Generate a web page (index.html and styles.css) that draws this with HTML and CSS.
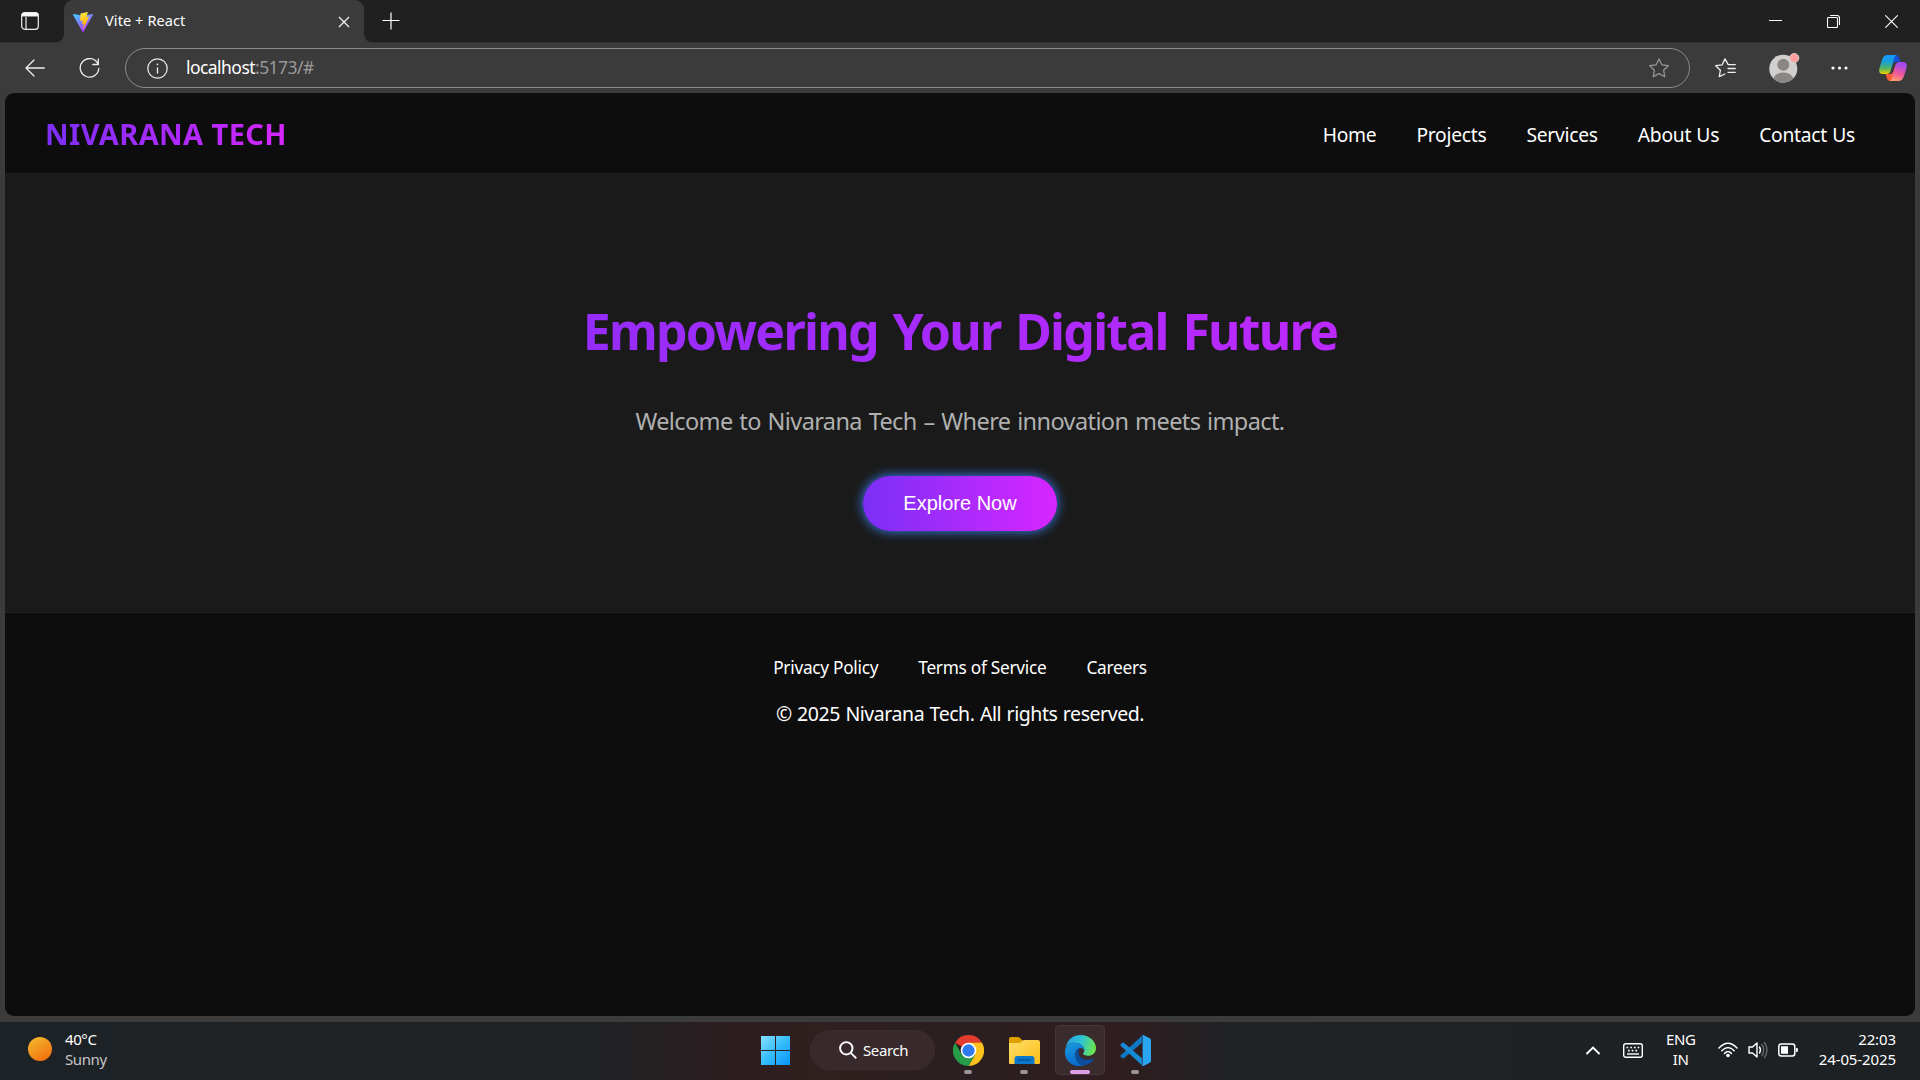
FILE: index.html
```html
<!DOCTYPE html>
<html lang="en">
<head>
<meta charset="utf-8">
<title>Vite + React</title>
<link rel="stylesheet" href="styles.css">
</head>
<body>
<div class="tabstrip">
  <svg class="workspaces" width="18" height="18" viewBox="0 0 18 18" fill="none" stroke="#eee" stroke-width="1.2"><rect x=".7" y=".7" width="16.6" height="16.6" rx="3"/><path d="M5 5v12"/><path d="M1 4V3q0-2 2-2h12q2 0 2 2v1z" fill="#fff"/></svg>
  <div class="tab">
    <svg width="20" height="20" viewBox="0 0 32 32"><defs><linearGradient id="va" x1="0" y1="0" x2=".6" y2="1"><stop stop-color="#41d1ff"/><stop offset="1" stop-color="#bd34fe"/></linearGradient><linearGradient id="vb" x1=".4" y1="0" x2=".6" y2="1"><stop stop-color="#ffea83"/><stop offset=".1" stop-color="#ffdd35"/><stop offset="1" stop-color="#ffa800"/></linearGradient></defs><path fill="url(#va)" d="M31.8 4.8 16.9 31.4a1 1 0 0 1-1.8 0L.1 4.8a1 1 0 0 1 1.1-1.5l14.900 2.700 14.600-2.700a1 1 0 0 1 1.100 1.500z"/><path fill="url(#vb)" d="M23.300.1 12.300 2.200a.4.4 0 0 0-.3.4l-.7 11.400a.4.4 0 0 0 .5.400l3.100-.7a.4.4 0 0 1 .5.500l-.9 4.500a.4.4 0 0 0 .5.500l1.900-.6a.4.4 0 0 1 .5.500l-1.500 7c-.1.400.500.700.7.300l9.100-18.500a.4.4 0 0 0-.4-.6l-3.200.6a.4.4 0 0 1-.5-.5L23.700.6a.4.4 0 0 0-.4-.5z"/></svg>
    <span class="tab-title">Vite + React</span>
    <svg width="12" height="12" viewBox="0 0 12 12" stroke="#eee" stroke-width="1.4"><path d="M1 1l10 10M11 1 1 11"/></svg>
  </div>
  <svg class="newtab" width="18" height="18" viewBox="0 0 18 18" stroke="#fff" stroke-width="1.2"><path d="M9 .5v17M.5 8.500h17"/></svg>
  <div class="window-controls">
    <svg width="13" height="13" viewBox="0 0 13 13"><path d="M0 5.500h13" stroke="#fff"/></svg>
    <svg width="13" height="13" viewBox="0 0 13 13" fill="none" stroke="#fff" stroke-width="1.1"><rect x=".5" y="2.500" width="10" height="10" rx="1"/><path d="M3 .5h7q2.500 0 2.500 2.500v7"/></svg>
    <svg width="13" height="13" viewBox="0 0 13 13" stroke="#fff" stroke-width="1.1"><path d="M.3.3l12.400 12.400M12.700.3.3 12.700"/></svg>
  </div>
</div>
<div class="toolbar">
  <svg width="20" height="18" viewBox="0 0 20 18" fill="none" stroke="#eee" stroke-width="1.300" stroke-linecap="round" stroke-linejoin="round"><path d="M19.300 9H1M9 1 1 9l8 8"/></svg>
  <svg class="reload" width="21" height="21" viewBox="0 0 21 21" fill="none" stroke="#eee" stroke-width="1.300" stroke-linecap="round" stroke-linejoin="round"><path d="M19 6A9.300 9.300 0 1 0 19.800 10.500M19.300 1v5.500h-5.500"/></svg>
  <div class="address">
    <svg width="21" height="21" viewBox="0 0 21 21" fill="none" stroke="#eee" stroke-width="1.200"><circle cx="10.500" cy="10.500" r="9.700"/><path d="M10.500 9.500v6" stroke-width="1.400"/><circle cx="10.500" cy="6.300" r=".9" fill="#eee" stroke="none"/></svg>
    <span class="url"><b>localhost</b>:5173/#</span>
    <svg width="20" height="20" viewBox="0 0 20 20" fill="none" stroke="#999" stroke-width="1.200" stroke-linejoin="round"><path d="M10 .9l2.800 5.900 6.500.9-4.700 4.500 1.100 6.500L10 15.600l-5.700 3.100 1.100-6.500L.7 7.700l6.500-.9z"/></svg>
  </div>
  <svg class="favorites" width="21" height="20" viewBox="0 0 21 20" fill="none" stroke="#eee" stroke-width="1.300" stroke-linejoin="round" stroke-linecap="round"><path d="M19.500 6.600h-6.300L10 .9 7.200 6.800l-6.500.9 4.700 4.500-1.100 6.500L9.800 16M13 10.500h7.300M13 14.300h7.300M19.500 6.600h.8"/></svg>
  <svg class="profile" width="31" height="30" viewBox="0 0 31 30"><defs><clipPath id="pc"><circle cx="14.300" cy="15.700" r="14"/></clipPath></defs><circle cx="14.300" cy="15.700" r="14" fill="#d2d0ce"/><g clip-path="url(#pc)" fill="#8a8886"><circle cx="14.300" cy="11.700" r="6"/><ellipse cx="14.300" cy="26.500" rx="10" ry="7"/></g><circle cx="25.300" cy="5" r="4.500" fill="#ff9e9a" stroke="#d9cccb"/></svg>
  <svg class="more" width="17" height="4" viewBox="0 0 17 4" fill="#fff"><circle cx="2" cy="2" r="1.600"/><circle cx="8.500" cy="2" r="1.600"/><circle cx="15" cy="2" r="1.600"/></svg>
  <svg class="copilot" width="28" height="26" viewBox="0 0 28 26"><defs><linearGradient id="c1" x1="0" y1="0" x2="0" y2="1"><stop stop-color="#169bff"/><stop offset=".35" stop-color="#199fd9"/><stop offset=".7" stop-color="#52b464"/><stop offset="1" stop-color="#f2d600"/></linearGradient><linearGradient id="c2" x1=".3" y1="0" x2="0" y2="1"><stop stop-color="#a34bf0"/><stop offset=".5" stop-color="#f0589b"/><stop offset="1" stop-color="#ffab62"/></linearGradient></defs><path d="M14 0h3q2.300 0 3 2.500L21.500 7H17q-2.500 0-3.500 3L11 18z" fill="#1650d3"/><path d="M14 26h-3q-2.300 0-3-2.500L6.500 19H11q2.500 0 3.500-3L17 8z" fill="#f35b39"/><path d="M8.500 0H18q-2 0-3 3.500l-3.300 12Q10.500 19 7.500 19H4Q-1 19 .5 13L3 5Q4.500 0 8.500 0z" fill="url(#c1)"/><path d="M19.500 26H10q2 0 3-3.500l3.300-12Q17.500 7 20.500 7H24q5 0 3.500 6L25 21q-1.500 5-5.500 5z" fill="url(#c2)"/></svg>
</div>
<div class="viewport">
  <header class="site-header">
    <div class="logo">NIVARANA TECH</div>
    <nav class="nav"><a>Home</a><a>Projects</a><a>Services</a><a>About Us</a><a>Contact Us</a></nav>
  </header>
  <section class="hero">
    <h1>Empowering Your Digital Future</h1>
    <p>Welcome to Nivarana Tech – Where innovation meets impact.</p>
    <button>Explore Now</button>
  </section>
  <footer class="site-footer">
    <div class="links"><a>Privacy Policy</a><a>Terms of Service</a><a>Careers</a></div>
    <p>© 2025 Nivarana Tech. All rights reserved.</p>
  </footer>
</div>
<div class="taskbar">
  <div class="weather"><span class="sun"></span><div class="stack"><span>40°C</span><span class="dim">Sunny</span></div></div>
  <svg class="start" width="29" height="29" viewBox="0 0 29 29"><defs><linearGradient id="w" gradientUnits="userSpaceOnUse" x1="0" y1="0" x2="29" y2="29"><stop stop-color="#86e0ff"/><stop offset=".5" stop-color="#35bcfb"/><stop offset="1" stop-color="#0795f8"/></linearGradient></defs><path fill="url(#w)" d="M0 0h14v14H0zM15 0h14v14H15zM0 15h14v14H0zM15 15h14v14H15z"/></svg>
  <div class="search"><svg width="18" height="18" viewBox="0 0 18 18" fill="none" stroke="#fff" stroke-width="1.900"><circle cx="7.300" cy="7.300" r="6.200"/><path d="M11.800 11.800l5.500 5.500"/></svg><span>Search</span></div>
  <div class="apps">
    <div class="app"><svg width="31" height="31" viewBox="0 0 48 48"><path d="M24 24 3.200 12A24 24 0 0 1 44.800 12z" fill="#e33b2e"/><path d="M24 24V12h20.800A24 24 0 0 1 24 48L34.400 30z" fill="#fcc21b"/><path d="M24 24l10.400 6L24 48A24 24 0 0 1 3.200 12L13.600 30z" fill="#269b48"/><circle cx="24" cy="24" r="12" fill="#fff"/><circle cx="24" cy="24" r="9.500" fill="#2f7bee"/></svg></div>
    <div class="app"><svg width="31" height="27" viewBox="0 0 31 27"><defs><linearGradient id="f" x1="0" y1="0" x2="1" y2="1"><stop stop-color="#ffdf6a"/><stop offset="1" stop-color="#fdbc16"/></linearGradient></defs><path d="M0 10V2Q0 0 2 0h7q1.500 0 2.500 1.500L14 4l-3 6z" fill="#e0a000"/><path d="M0 6h10q1.500 0 2.500-1.500T15 3h14q2 0 2 2v21q0 1-1 1H1q-1 0-1-1z" fill="url(#f)"/><path d="M5.500 27v-5q0-3 3-3h14q3 0 3 3v5z" fill="#0c77cb"/><path d="M9 23h13" stroke="#064f9a" stroke-width="1.300"/></svg></div>
    <div class="app active"><svg width="31" height="31" viewBox="0 0 48 48"><defs><linearGradient id="e1" x1="0" y1=".3" x2="1" y2=".5"><stop stop-color="#259fe3"/><stop offset=".5" stop-color="#2dc5d3"/><stop offset="1" stop-color="#6be548"/></linearGradient><linearGradient id="e2" x1="0" y1="0" x2=".4" y2="1"><stop stop-color="#1b9de2"/><stop offset="1" stop-color="#0869c9"/></linearGradient></defs><path d="M1 20C4 6 13 0 24 0c14 0 24 10 24 20 0 8-6 12-12 12-5 0-8-1.500-8-3 0-1.500 2-2 2-5C30 17 23 12 15 12 8 12 3 15 1 20z" fill="url(#e1)"/><path d="M0 25C1 16 8 12 15 12c8 0 15 5 15 12-1-2-3-4-6-4-5 0-8 5-8 10 0 8 5 15 13 18-16 3-30-7-29-23z" fill="url(#e2)"/><path d="M24 20c-5 1-8 5-8 10 0 9 6 18 15 17 6-1 10-4 13-9 1-1 0-2-1-1.500C33 41 22 37 21 28c-.3-3 1-6 3-8z" fill="#0b4c9c"/></svg></div>
    <div class="app"><svg width="31" height="31" viewBox="0 0 48 48"><path d="M34 12 6 36q-1 .7-2 0l-3-2.500q-1-1 0-2L34 1z" fill="#0f78c3"/><path d="M34 36 6 12q-1-.7-2 0l-3 2.500q-1 1 0 2L34 47z" fill="#168bd5"/><path d="M34 .5q1.500-.8 3 0L46 5q2 1 2 3v32q0 2-2 3l-9 4.500q-2 1-3.500-.5 1.500.5 1.500-2V3q0-2-1-2.500z" fill="#2aa5f2"/></svg></div>
  </div>
  <div class="tray">
    <svg width="14" height="9" viewBox="0 0 14 9" fill="none" stroke="#fff" stroke-width="1.800" stroke-linecap="round"><path d="M1 7.500l6-6 6 6"/></svg>
    <svg class="keyboard" width="20" height="15" viewBox="0 0 20 15" fill="none" stroke="#fff" stroke-width="1.400"><rect x=".7" y=".7" width="18.600" height="13.600" rx="2"/><path d="M3.500 4.500h14" stroke-width="1.700" stroke-dasharray="1.700 2"/><path d="M5 7.700h11" stroke-width="1.700" stroke-dasharray="1.700 2"/><path d="M4 11h12" stroke-width="1.400"/></svg>
    <div class="stack lang"><span>ENG</span><span>IN</span></div>
    <svg class="wifi" width="20" height="16" viewBox="0 0 20 16" fill="none" stroke="#fff" stroke-width="1.500" stroke-linecap="round"><path d="M1 6q9-9.500 18 0M3.800 8.700q6.200-6.600 12.400 0M6.500 11.400q3.500-3.800 7 0"/><circle cx="10" cy="13.500" r="1.800" fill="#fff" stroke="none"/></svg>
    <svg class="speaker" width="20" height="18" viewBox="0 0 20 18" fill="none" stroke="#fff" stroke-width="1.400" stroke-linejoin="round" stroke-linecap="round"><path d="M1 6h3.500L9 2v14L4.500 12H1zM11.500 6q2 3 0 6"/><path d="M14 3.500q3.500 5.500 0 11M16.500 1.500q5 7.500 0 15" stroke="#666"/></svg>
    <svg class="battery" width="20" height="14" viewBox="0 0 20 14"><rect x=".8" y="1" width="16" height="12" rx="2.500" fill="none" stroke="#fff" stroke-width="1.500"/><path d="M3 3.200h7v7.600H3zM18 5h1q1 0 1 2t-1 2h-1z" fill="#fff"/></svg>
    <div class="stack clock"><span>22:03</span><span>24-05-2025</span></div>
  </div>
</div>
</body>
</html>
```
FILE: styles.css
```css
* { box-sizing: border-box; }
body { margin: 0; width: 1920px; height: 1080px; overflow: hidden; display: flex; flex-direction: column; background: #3b3b3b; color: #fff; font-family: "Noto Sans", "Open Sans", sans-serif; }
svg { display: block; flex: none; }
h1, p { margin: 0; }

.tabstrip { height: 43px; flex: none; display: flex; align-items: center; background: #202020; border-bottom: 1px solid #303030; }
.workspaces { margin: 0 25px 0 21px; }
.tab { position: relative; width: 300px; height: 43px; margin-bottom: -1px; padding: 0 14px 0 9px; display: flex; align-items: center; background: #3b3b3b; border-radius: 9px 9px 0 0; }
.tab::before, .tab::after { content: ""; position: absolute; bottom: 0; width: 9px; height: 9px; }
.tab::before { left: -9px; background: radial-gradient(circle at 0 0, transparent 8.5px, #3b3b3b 9px); }
.tab::after { right: -9px; background: radial-gradient(circle at 100% 0, transparent 8.5px, #3b3b3b 9px); }
.tab-title { flex: 1; margin-left: 12px; font-size: 14.5px; line-height: 20px; letter-spacing: .1px; padding-bottom: 3px; }
.newtab { margin-left: 18px; }
.window-controls { margin-left: auto; margin-right: 22px; display: flex; gap: 45px; }

.toolbar { height: 50px; flex: none; display: flex; align-items: center; padding: 0 13px 0 25px; }
.reload { margin: 0 25px 0 34px; }
.address { width: 1565px; height: 40px; display: flex; align-items: center; padding: 0 20px 0 21px; border: 1px solid #8b8b8b; border-radius: 20px; }
.url { flex: 1; margin-left: 18px; font-size: 17.5px; line-height: 24px; letter-spacing: -.55px; color: #999; padding-bottom: 2px; }
.url b { font-weight: 400; color: #fff; }
.favorites { margin-left: 25px; }
.profile { margin-left: 33px; }
.more { margin-left: 31px; }
.copilot { margin-left: auto; }

.viewport { height: 923px; flex: none; margin: 0 5px; background: #0d0d0d; border-radius: 9px; overflow: hidden; }
.site-header { height: 81px; display: flex; align-items: center; justify-content: space-between; padding: 0 60px 0 40px; border-bottom: 1px solid #1f1f1f; }
.logo { font-size: 29px; line-height: 40px; font-weight: 700; letter-spacing: .4px; padding-top: 2px; color: transparent; background: linear-gradient(90deg, #7b2ff7, #d726ff); background-clip: text; }
.nav { display: flex; gap: 40px; padding-top: 4px; font-size: 19.25px; line-height: 28px; letter-spacing: -.26px; word-spacing: .5px; }
.hero { height: 438px; display: flex; flex-direction: column; align-items: center; background: #1a1a1a; padding: 123px 40px 0; }
.hero h1 { width: 100%; text-align: center; font-size: 50px; line-height: 68px; letter-spacing: -1.75px; word-spacing: 3.5px; color: transparent; background: linear-gradient(90deg, #7b2ff7, #d726ff); background-clip: text; }
.hero p { margin: 40px 0 39px; font-size: 23.5px; line-height: 32px; letter-spacing: -.6px; word-spacing: 1.2px; color: #b0b0b0; }
.hero button { width: 194px; height: 55px; border: 0; border-radius: 28px; background: linear-gradient(90deg, #7b2ff7, #d726ff); color: #fff; font: 20px "Liberation Sans", Arial, sans-serif; box-shadow: 0 0 12px #3a86ff; }
.site-footer { padding-top: 43px; text-align: center; border-top: 1px solid #222; }
.links { display: flex; justify-content: center; gap: 40px; font-size: 17.25px; line-height: 24px; letter-spacing: -.27px; }
.site-footer p { margin-top: 21px; font-size: 19.5px; line-height: 26px; letter-spacing: -.44px; word-spacing: .8px; }

.taskbar { height: 59px; margin-top: auto; flex: none; display: flex; align-items: center; padding-bottom: 2px; border-top: 1px solid #393b3c; font-size: 15px; background: linear-gradient(90deg, #1d2226 0, #1e2225 30%, #2d1d1f 39%, #30201f 43%, #2a1f21 50%, #301d1f 58%, #202225 64%, #1d2124 100%); }
.stack { display: flex; flex-direction: column; line-height: 20px; padding-bottom: 3px; letter-spacing: -.4px; }
.dim { color: #c5c7c8; }
.weather { width: 761px; display: flex; align-items: center; padding-left: 28px; gap: 13px; }
.sun { width: 24px; height: 24px; border-radius: 50%; background: linear-gradient(150deg, #f3bd2e, #f2670b); margin-bottom: 2px; }
.search { width: 125px; height: 40px; margin: 0 8px 0 20px; padding-left: 28px; display: flex; align-items: center; gap: 6px; border-radius: 20px; border: 1px solid #3b2e30; background: #382a2c; letter-spacing: -.4px; }
.search span { padding-bottom: 1px; }
.apps { display: flex; gap: 6px; }
.app { position: relative; width: 50px; height: 50px; display: flex; align-items: center; justify-content: center; border-radius: 5px; }
.app:last-child { margin-left: -1px; }
.app::after { content: ""; position: absolute; bottom: 1px; left: 21px; width: 8px; height: 4px; border-radius: 2px; background: #9b9697; }
.active { background: #3a2b2d; box-shadow: inset 0 0 0 1px #453638; }
.active::after { left: 15px; width: 20px; background: #dc9ee4; }
.tray { margin-left: auto; display: flex; align-items: center; padding-right: 24px; }
.keyboard { margin-left: 23px; }
.lang { width: 40px; margin-left: 18px; text-align: center; }
.wifi { margin-left: 17px; }
.speaker { margin-left: 10px; }
.battery { margin-left: 10px; }
.clock { margin-left: 21px; text-align: right; letter-spacing: -.1px; }
```
